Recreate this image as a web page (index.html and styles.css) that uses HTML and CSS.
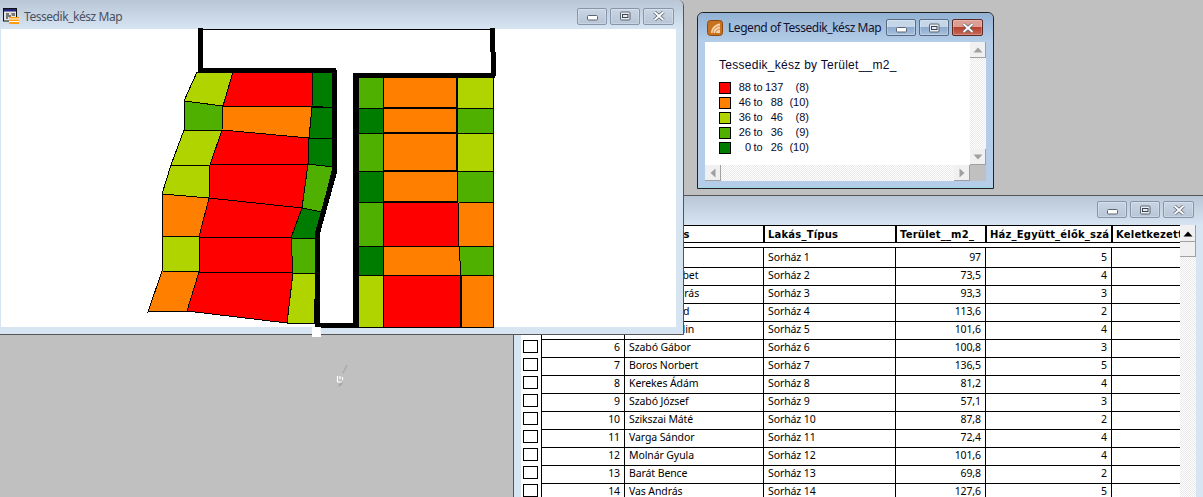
FILE: index.html
```html
<!DOCTYPE html>
<html lang="hu">
<head>
<meta charset="utf-8">
<title>Tessedik_kész</title>
<link rel="stylesheet" href="styles.css">
</head>
<body>
<svg class="defs" width="0" height="0" aria-hidden="true">
  <symbol id="g-min" viewBox="0 0 12 7"><rect x="1.5" y="1.5" width="10" height="4.5" rx="1" fill="#fff" stroke="#5c6470"/></symbol>
  <symbol id="g-max" viewBox="0 0 12 10"><rect x="1.5" y="1" width="9.5" height="8" rx="1" fill="#e8edf3" stroke="#5c6470"/><rect x="3.5" y="3.5" width="5.5" height="3" fill="none" stroke="#3d4450"/></symbol>
  <symbol id="g-close" viewBox="0 0 12 10"><path d="M1.5 1 L10.5 9 M10.5 1 L1.5 9" stroke="#5c6470" stroke-width="3.4"/><path d="M1.5 1 L10.5 9 M10.5 1 L1.5 9" stroke="#fff" stroke-width="1.8"/></symbol>
</svg>

<main class="desktop">

  <section class="win win-table">
    <header class="titlebar titlebar-table">
      <div class="controls">
        <span class="btn"><svg class="g g-low"><use href="#g-min"/></svg></span>
        <span class="btn"><svg class="g"><use href="#g-max"/></svg></span>
        <span class="btn"><svg class="g"><use href="#g-close"/></svg></span>
      </div>
    </header>
    <div class="table-client">
      <div class="table-area">
        <div class="thead">
          <span class="hcell"></span>
          <span class="hcell"></span>
          <span class="hcell hcell-owner">Tulajdonos</span>
          <span class="hcell">Lakás_Típus</span>
          <span class="hcell">Terület__m2_</span>
          <span class="hcell">Ház_Együtt_élők_száma</span>
          <span class="hcell">Keletkezett</span>
        </div>
        <div class="tbody">
          <div class="trow"><span class="chk"><i></i></span><span class="num">1</span><span>Kiss Éva</span><span>Sorház 1</span><span class="num">97</span><span class="num">5</span><span></span></div>
          <div class="trow"><span class="chk"><i></i></span><span class="num">2</span><span>Nagy Erzsébet</span><span>Sorház 2</span><span class="num">73,5</span><span class="num">4</span><span></span></div>
          <div class="trow"><span class="chk"><i></i></span><span class="num">3</span><span>Kovács András</span><span>Sorház 3</span><span class="num">93,3</span><span class="num">3</span><span></span></div>
          <div class="trow"><span class="chk"><i></i></span><span class="num">4</span><span>Nagy Arnold</span><span>Sorház 4</span><span class="num">113,6</span><span class="num">2</span><span></span></div>
          <div class="trow"><span class="chk"><i></i></span><span class="num">5</span><span>Horák Katalin</span><span>Sorház 5</span><span class="num">101,6</span><span class="num">4</span><span></span></div>
          <div class="trow"><span class="chk"><i></i></span><span class="num">6</span><span>Szabó Gábor</span><span>Sorház 6</span><span class="num">100,8</span><span class="num">3</span><span></span></div>
          <div class="trow"><span class="chk"><i></i></span><span class="num">7</span><span>Boros Norbert</span><span>Sorház 7</span><span class="num">136,5</span><span class="num">5</span><span></span></div>
          <div class="trow"><span class="chk"><i></i></span><span class="num">8</span><span>Kerekes Ádám</span><span>Sorház 8</span><span class="num">81,2</span><span class="num">4</span><span></span></div>
          <div class="trow"><span class="chk"><i></i></span><span class="num">9</span><span>Szabó József</span><span>Sorház 9</span><span class="num">57,1</span><span class="num">3</span><span></span></div>
          <div class="trow"><span class="chk"><i></i></span><span class="num">10</span><span>Szikszai Máté</span><span>Sorház 10</span><span class="num">87,8</span><span class="num">2</span><span></span></div>
          <div class="trow"><span class="chk"><i></i></span><span class="num">11</span><span>Varga Sándor</span><span>Sorház 11</span><span class="num">72,4</span><span class="num">4</span><span></span></div>
          <div class="trow"><span class="chk"><i></i></span><span class="num">12</span><span>Molnár Gyula</span><span>Sorház 12</span><span class="num">101,6</span><span class="num">4</span><span></span></div>
          <div class="trow"><span class="chk"><i></i></span><span class="num">13</span><span>Barát Bence</span><span>Sorház 13</span><span class="num">69,8</span><span class="num">2</span><span></span></div>
          <div class="trow"><span class="chk"><i></i></span><span class="num">14</span><span>Vas András</span><span>Sorház 14</span><span class="num">127,6</span><span class="num">5</span><span></span></div>
        </div>
      </div>
      <div class="vscroll vscroll-table">
        <span class="sb-btn sb-up-dark"><svg width="10" height="6" viewBox="0 0 10 6"><path d="M5 0.5 L9.5 5.5 H0.5 Z" fill="#000"/></svg></span>
        <span class="sb-thumb"></span>
      </div>
    </div>
  </section>

  <section class="win win-map">
    <header class="titlebar titlebar-map">
      <svg class="app-icon" viewBox="0 0 16 16" aria-hidden="true">
        <rect x="0.5" y="0.5" width="13" height="12.5" fill="#e4e4e4" stroke="#111"/>
        <rect x="1" y="1" width="12" height="2.5" fill="#23237a"/>
        <path d="M3 5h3v2h2v2H5v2H3zM8 5h4v3H9z" fill="#777"/>
        <path d="M6 9h10v7H6z" fill="#ff9c12"/>
        <path d="M6 11h10M6 13.500h10" stroke="#fff"/>
      </svg>
      <span class="win-title win-title-muted">Tessedik_kész Map</span>
      <div class="controls">
        <span class="btn"><svg class="g g-low"><use href="#g-min"/></svg></span>
        <span class="btn"><svg class="g"><use href="#g-max"/></svg></span>
        <span class="btn"><svg class="g"><use href="#g-close"/></svg></span>
      </div>
    </header>
    <div class="map-client">
      <svg class="map" viewBox="1 29 675 298" width="675" height="298" aria-label="Tessedik_kész map">
        <g class="cells">
          <polygon class="c3" points="197,72 233,72 223,106 184,101"/>
          <polygon class="c1" points="233,72 313,72 312,106 223,106"/>
          <polygon class="c5" points="313,72 333,72 333,108 312,106"/>
          <polygon class="c4" points="184,101 223,106 222,130 184,130"/>
          <polygon class="c2" points="223,106 312,106 309,138 222,130"/>
          <polygon class="c5" points="312,107 333,108 333,138 309,138"/>
          <polygon class="c3" points="184,130 222,130 210,165 171,165"/>
          <polygon class="c1" points="222,130 309,138 308,164 210,165"/>
          <polygon class="c5" points="309,138 333,138 333,167 308,164"/>
          <polygon class="c3" points="171,165 210,165 209,198 162,194"/>
          <polygon class="c1" points="210,165 308,164 302,208 209,198"/>
          <polygon class="c4" points="308,164 333,167 322,212 302,208"/>
          <polygon class="c2" points="162,194 209,198 199,237 162,236"/>
          <polygon class="c1" points="209,198 302,208 291,238 199,237"/>
          <polygon class="c5" points="302,208 322,212 316,238 291,238"/>
          <polygon class="c3" points="162,236 199,237 199,272 162,271"/>
          <polygon class="c1" points="199,237 291,238 293,272 199,272"/>
          <polygon class="c4" points="291,238 316,238 316,274 293,273"/>
          <polygon class="c2" points="162,271 199,272 187,311 148,312"/>
          <polygon class="c1" points="199,272 293,272 287,323 187,311"/>
          <polygon class="c3" points="293,273 316,274 314,324 287,323"/>

          <polygon class="c4" points="358,77 383,77 383,108 358,108"/>
          <polygon class="c2" points="383,77 457,77 457,108 383,108"/>
          <polygon class="c3" points="457,77 493,77 493,108 457,108"/>
          <polygon class="c5" points="358,108 383,108 383,133 358,133"/>
          <polygon class="c2" points="383,108 457,108 457,133 383,133"/>
          <polygon class="c4" points="457,108 493,108 493,133 457,133"/>
          <polygon class="c4" points="358,133 383,133 383,171 358,171"/>
          <polygon class="c2" points="383,133 457,133 457,171 383,171"/>
          <polygon class="c3" points="457,133 493,133 493,171 457,171"/>
          <polygon class="c5" points="358,171 383,171 383,202 358,202"/>
          <polygon class="c2" points="383,171 457,171 457,202 383,202"/>
          <polygon class="c4" points="457,171 493,171 493,203 457,202"/>
          <polygon class="c4" points="358,203 383,202 383,246 358,246"/>
          <polygon class="c1" points="383,202 458,202 459,246 383,246"/>
          <polygon class="c2" points="458,202 493,203 493,246 459,246"/>
          <polygon class="c5" points="358,246 383,246 383,275 358,276"/>
          <polygon class="c2" points="383,246 459,246 461,275 383,275"/>
          <polygon class="c4" points="459,246 493,246 493,276 461,275"/>
          <polygon class="c3" points="358,276 383,275 383,327 358,327"/>
          <polygon class="c1" points="383,275 461,275 461,327 383,327"/>
          <polygon class="c2" points="461,275 493,276 493,327 461,327"/>
        </g>
        <g class="seams">
          <path d="M457 77V171M383 108H457M383 133H457M383 171H457M383 202H458M461 275V327"/>
        </g>
        <g class="bounds">
          <path class="top-line" d="M200 29.500H492"/>
          <path d="M200 28V70M198 70H336M334 70V120L335 170L317 235V325L357 326M355.500 75V328M353 75H495M492.500 28V52M493.500 52V76"/>
        </g>
      </svg>
    </div>
  </section>

  <span class="handle"></span>

  <svg class="cursor-trace" viewBox="0 0 14 26" width="14" height="26" aria-hidden="true">
    <path d="M11 0 L7 8" stroke="#aaa" stroke-width="1.600"/>
    <path d="M1.500 11V17M4 11V14M6.500 12V15M1.500 17H6" stroke="#fff" stroke-width="1.200" fill="none"/>
    <path d="M3 21 L6 18" stroke="#a4a4a4" stroke-width="2"/>
  </svg>

  <section class="win win-legend">
    <header class="titlebar titlebar-legend">
      <svg class="app-icon" viewBox="0 0 16 16" aria-hidden="true">
        <rect x="0.500" y="0.500" width="15" height="15" rx="3" fill="#c8721f" stroke="#8a4a12"/>
        <path d="M4 13C4 8 8 4 13 3.500V13Z" fill="#f6d7b4"/>
        <path d="M6 13C6 9.500 9 6.500 13 6M8.500 13C8.500 11 10.500 9 13 9" stroke="#e07a2a" fill="none"/>
      </svg>
      <span class="win-title">Legend of Tessedik_kész Map</span>
      <div class="controls">
        <span class="btn btn-active"><svg class="g g-low"><use href="#g-min"/></svg></span>
        <span class="btn btn-active"><svg class="g"><use href="#g-max"/></svg></span>
        <span class="btn btn-close"><svg class="g"><use href="#g-close"/></svg></span>
      </div>
    </header>
    <div class="legend-client">
      <div class="legend-body">
        <h1 class="legend-title">Tessedik_kész by Terület__m2_</h1>
        <ul class="legend-list">
          <li class="legend-row"><i class="swatch c1"></i><span class="from">88</span><span class="to">to</span><span class="upper">137</span><span class="count">(8)</span></li>
          <li class="legend-row"><i class="swatch c2"></i><span class="from">46</span><span class="to">to</span><span class="upper">88</span><span class="count">(10)</span></li>
          <li class="legend-row"><i class="swatch c3"></i><span class="from">36</span><span class="to">to</span><span class="upper">46</span><span class="count">(8)</span></li>
          <li class="legend-row"><i class="swatch c4"></i><span class="from">26</span><span class="to">to</span><span class="upper">36</span><span class="count">(9)</span></li>
          <li class="legend-row"><i class="swatch c5"></i><span class="from">0</span><span class="to">to</span><span class="upper">26</span><span class="count">(10)</span></li>
        </ul>
      </div>
      <div class="vscroll">
        <span class="sb-btn"><svg width="10" height="6" viewBox="0 0 10 6"><path d="M5 0.500 L9.500 5.500 H0.500 Z" fill="#a0a0a0"/></svg></span>
        <span class="sb-btn"><svg width="10" height="6" viewBox="0 0 10 6"><path d="M5 5.500 L9.500 0.500 H0.500 Z" fill="#a0a0a0"/></svg></span>
      </div>
      <div class="hscroll">
        <span class="sb-btn"><svg width="6" height="10" viewBox="0 0 6 10"><path d="M0.500 5 L5.500 0.500 V9.500 Z" fill="#a0a0a0"/></svg></span>
        <span class="sb-btn"><svg width="6" height="10" viewBox="0 0 6 10"><path d="M5.500 5 L0.500 0.500 V9.500 Z" fill="#a0a0a0"/></svg></span>
      </div>
      <div class="sb-corner"></div>
    </div>
  </section>

</main>
</body>
</html>
```

FILE: styles.css
```css
* { box-sizing: border-box; }

html, body {
  margin: 0;
  height: 100%;
  overflow: hidden;
}

.defs { position: absolute; }

.desktop {
  position: relative;
  width: 1203px;
  height: 497px;
  overflow: hidden;
  background: #c0c0c0;
  font-family: "Noto Sans", "Liberation Sans", sans-serif;
  color: #000;
}

/* windows */
.win {
  position: absolute;
  display: flex;
  flex-direction: column;
}

.win-map {
  left: 0;
  top: 0;
  width: 684px;
  height: 335px;
  padding: 0 7px 7px 1px;
  background: #d7e4f2;
  border-right: 1px solid #555;
  border-bottom: 1px solid #555;
  border-top-right-radius: 6px;
  z-index: 2;
}

.win-table {
  left: 513px;
  top: 195px;
  width: 700px;
  height: 320px;
  padding: 0 17px 0 7px;
  background: #d7e4f2;
  border-left: 1px solid #555;
  border-top: 1px solid #555;
  z-index: 1;
}

.win-legend {
  left: 697px;
  top: 12px;
  width: 297px;
  height: 177px;
  padding: 0 7px 7px 7px;
  background: #b4cde8;
  border: 1px solid #222;
  border-top-left-radius: 6px;
  border-top-right-radius: 6px;
  box-shadow: inset 0 -1px 0 #9fd6e6;
  z-index: 3;
}

/* title bars */
.titlebar {
  flex: none;
  display: flex;
  align-items: center;
}

.titlebar-map {
  height: 29px;
  margin: 0 -7px 0 -1px;
  padding: 6px 9px 3px 3px;
  background: linear-gradient(#b9c6d5, #d7e4f2);
  border-top-right-radius: 6px;
}

.titlebar-table {
  height: 29px;
  margin: 0 -17px 0 -7px;
  padding: 1px 19px 3px 7px;
  background: linear-gradient(#b9c6d5, #d7e4f2);
  justify-content: flex-end;
}

.titlebar-legend {
  height: 29px;
  margin: 0 -7px;
  padding: 1px 10px 1px 9px;
  background: linear-gradient(#93b2d4, #b4cde8);
  border-top-left-radius: 6px;
  border-top-right-radius: 6px;
}

.app-icon {
  flex: none;
  width: 16px;
  height: 16px;
}

.win-title {
  margin-left: 5px;
  font-family: "Noto Sans", "Liberation Sans", sans-serif;
  font-size: 12px;
  letter-spacing: -0.45px;
  color: #12122e;
  white-space: nowrap;
}

.win-title-muted { color: #4b5160; }

.controls {
  display: flex;
  gap: 3px;
  margin-left: auto;
}

.btn {
  display: flex;
  align-items: center;
  justify-content: center;
  width: 30px;
  height: 17px;
  background: linear-gradient(#c9d5e3, #b7c5d7);
  border: 1px solid #8795aa;
  border-radius: 2px;
  box-shadow: inset 0 0 0 1px rgba(255, 255, 255, 0.25);
}

.btn:last-child { width: 31px; }

.btn-active {
  background: linear-gradient(#c5d6e9 45%, #8cabcf 50%, #a7c0dd);
  border-color: #5a6a80;
}

.btn-close {
  background: linear-gradient(#dd9d92 45%, #b9402f 50%, #c66a58);
  border-color: #5c2a24;
}

.g { width: 12px; height: 10px; }
.g-low { height: 7px; margin-top: 3px; }

/* map */
.map-client {
  flex: 1;
  background: #fff;
}

.map {
  display: block;
  overflow: visible;
}

.cells polygon {
  stroke: #000;
  stroke-width: 1;
  shape-rendering: crispEdges;
}

.c1 { fill: #ff0000; background: #ff0000; }
.c2 { fill: #ff8000; background: #ff8000; }
.c3 { fill: #b0d400; background: #b0d400; }
.c4 { fill: #50b000; background: #50b000; }
.c5 { fill: #007d00; background: #007d00; }

.seams path {
  fill: none;
  stroke: #000;
  stroke-width: 2;
  shape-rendering: crispEdges;
}

.bounds path {
  fill: none;
  stroke: #000;
  stroke-width: 5;
  stroke-linejoin: round;
  shape-rendering: crispEdges;
}

.bounds .top-line { stroke-width: 1; }

.handle {
  position: absolute;
  left: 312px;
  top: 327px;
  width: 9px;
  height: 10px;
  background: #fff;
  z-index: 4;
}

.cursor-trace {
  position: absolute;
  left: 336px;
  top: 365px;
  z-index: 4;
}

/* legend */
.legend-client {
  flex: 1;
  display: grid;
  grid-template-columns: 265px 16px;
  grid-template-rows: 123px 16px;
  background: #fff;
}

.legend-body {
  padding: 14px 0 0 14px;
  color: #08082a;
  font-family: "Liberation Sans", Arial, sans-serif;
}

.legend-title {
  margin: 0;
  font-weight: 400;
  font-size: 12px;
  line-height: 18px;
  letter-spacing: 0.27px;
  white-space: nowrap;
}

.legend-list {
  list-style: none;
  margin: 6px 0 0;
  padding: 0;
}

.legend-row {
  display: grid;
  grid-template-columns: 19px 13px 14px 18px 26px;
  width: 90px;
  height: 15px;
  align-items: center;
  font-size: 11px;
  line-height: 15px;
  white-space: nowrap;
}

.swatch {
  display: block;
  width: 12px;
  height: 12px;
  border: 1px solid #000;
}

.from, .upper, .count { text-align: right; }

.to { text-align: center; }

/* scrollbars */
.vscroll, .hscroll {
  display: flex;
  justify-content: space-between;
  background: repeating-conic-gradient(#e9e9e9 0 25%, #fff 0 50%) 0 0 / 2px 2px;
}

.vscroll { flex-direction: column; }

.sb-btn {
  flex: none;
  display: flex;
  align-items: center;
  justify-content: center;
  width: 16px;
  height: 16px;
  background: #f0f0f0;
  box-shadow: inset -1px -1px 0 #a0a0a0;
}

.sb-corner { background: #c0c0c0; }

.vscroll-table {
  flex: none;
  width: 16px;
  justify-content: flex-start;
}

.sb-up-dark { height: 17px; }

.sb-thumb {
  flex: none;
  width: 16px;
  height: 15px;
  background: #f0f0f0;
  box-shadow: inset -1px -1px 0 #a0a0a0;
}

/* table */
.table-client {
  flex: 1;
  display: flex;
  width: 675px;
  background: #fff;
}

.table-area {
  flex: none;
  width: 659px;
  font-size: 10.5px;
  line-height: 19px;
}

.thead, .trow {
  display: grid;
  grid-template-columns: 20px 83px 139px 132px 90px 126px 69px;
}

.thead {
  height: 18px;
  border-top: 1px solid #000;
  border-bottom: 1px solid #000;
  font-family: "DejaVu Sans", sans-serif;
  font-weight: 700;
  font-size: 10px;
  line-height: 17px;
  letter-spacing: 0.2px;
  white-space: nowrap;
}

.hcell {
  overflow: hidden;
  padding-left: 3px;
  border-left: 2px solid #000;
  border-right: 2px solid #fff;
}

.hcell:first-child { border-left: 0; }
.hcell:last-child { border-right: 0; }
.hcell-owner { letter-spacing: 0; }

.tbody { margin-top: 4px; border-top: 1px solid #000; margin-left: 20px; }

.trow {
  height: 18px;
  margin-left: -20px;
  white-space: nowrap;
  letter-spacing: -0.1px;
}

.trow > span {
  padding-left: 4px;
  border-left: 1px solid #000;
  border-bottom: 1px solid #000;
}

.trow > .chk {
  padding: 2px 0 0 2px;
  border: 0;
}

.chk i {
  display: block;
  width: 15px;
  height: 13px;
  border: 1px solid #000;
}

.trow > .num {
  padding: 0 4px 0 0;
  text-align: right;
}
```
